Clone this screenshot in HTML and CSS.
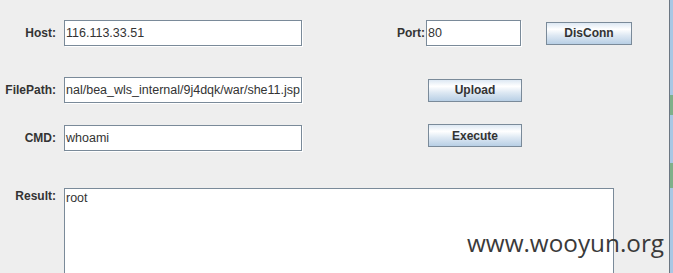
FILE: index.html
```html
<!DOCTYPE html>
<html lang="en">
<head>
    <meta charset="UTF-8">
    <meta name="viewport" content="width=device-width, initial-scale=1.0">
    <title>Shell</title>
    <link rel="stylesheet" href="styles.css">
</head>
<body>
    <div class="window">
        <div class="row row-host">
            <label class="label">Host:</label>
            <div class="field">116.113.33.51</div>
            <label class="label port-label">Port:</label>
            <div class="field">80</div>
            <span></span>
            <button class="btn">DisConn</button>
        </div>

        <div class="row row-path">
            <label class="label">FilePath:</label>
            <div class="field field-end"><span>nal/bea_wls_internal/9j4dqk/war/she11.jsp</span></div>
            <span></span>
            <button class="btn btn-wide">Upload</button>
        </div>

        <div class="row row-cmd">
            <label class="label">CMD:</label>
            <div class="field">whoami</div>
            <span></span>
            <button class="btn btn-wide">Execute</button>
        </div>

        <div class="row row-result">
            <label class="label">Result:</label>
            <div class="result">root</div>
        </div>

        <!-- 水印 -->
        <div class="watermark">www.wooyun.org</div>
    </div>
    <div class="edge"></div>
</body>
</html>
```

FILE: styles.css
```css
body {
    margin: 0;
    display: flex;
    height: 273px;
    overflow: hidden;
    background-color: #eeeeee;
    font-family: 'Liberation Sans', Arial, sans-serif;
    font-size: 12px;
    color: #333333;
}

.window {
    position: relative;
    flex: 1;
    border-right: 1px solid #6b7682;
}

.edge {
    width: 3px;
    background: linear-gradient(#a9c7e4 0, #a9c7e4 95px, #7fb08a 95px, #7fb08a 115px,
        #a9c7e4 115px, #a9c7e4 163px, #7fb08a 163px, #7fb08a 188px, #a9c7e4 188px);
}

.row {
    display: grid;
    grid-template-columns: 64px 238px 124px 95px 25px 86px;
    align-items: center;
}

.row-host {
    margin-top: 20px;
}

.row-path {
    margin-top: 31px;
    grid-template-columns: 64px 238px 126px 94px;
}

.row-cmd {
    margin-top: 22px;
    grid-template-columns: 64px 238px 126px 94px;
}

.row-result {
    margin-top: 37px;
    align-items: start;
}

.label {
    font-weight: bold;
    text-align: right;
    padding-right: 8px;
}

.port-label {
    padding-right: 1px;
}

.field {
    height: 24px;
    line-height: 24px;
    padding-left: 1px;
    font-size: 12.5px;
    background: #ffffff;
    border: 1px solid #7a8a99;
    box-shadow: 1px 1px 0 #ffffff;
    white-space: nowrap;
    overflow: hidden;
}

.field-end {
    display: flex;
    justify-content: flex-end;
    padding-right: 1px;
}

.btn {
    height: 23px;
    padding: 0;
    font-family: inherit;
    font-size: 12px;
    font-weight: bold;
    color: #333333;
    border: 1px solid #7a8a99;
    background: linear-gradient(#dde8f3 0%, #ffffff 30%, #dde8f3 60%, #b8cfe5 100%);
}

.row-cmd .btn {
    align-self: start;
    margin-top: -1px;
}

.label + .result {
    grid-column: 2 / 7;
}

.result {
    width: 546px;
    height: 90px;
    padding: 2px 1px;
    font-size: 12.5px;
    background: #ffffff;
    border: 1px solid #7a8a99;
    border-bottom: none;
}

.row-result .label {
    padding-top: 1px;
}

.watermark {
    position: absolute;
    left: 467px;
    top: 226px;
    font-family: 'Open Sans', sans-serif;
    font-size: 24.3px;
    color: #3a3a3a;
}
```
